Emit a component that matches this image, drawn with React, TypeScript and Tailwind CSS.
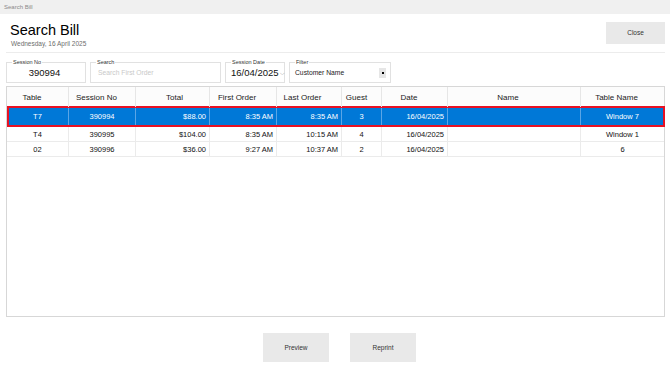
import { ReactNode } from "react";

type Col = {
  name: string;
  width: string;
  head: string;
  body: string;
};

const cols: Col[] = [
  { name: "Table", width: "w-[62px]", head: "pr-[11px]", body: "justify-center" },
  { name: "Session No", width: "w-[67px]", head: "pr-[11px]", body: "justify-center" },
  { name: "Total", width: "w-[74px]", head: "pl-[4px]", body: "justify-end pr-[3px]" },
  { name: "First Order", width: "w-[67px]", head: "pr-[12px]", body: "justify-end pr-[3px]" },
  { name: "Last Order", width: "w-[65px]", head: "pr-[13px]", body: "justify-end pr-[3px]" },
  { name: "Guest", width: "w-[40px]", head: "pr-[10px]", body: "justify-center" },
  { name: "Date", width: "w-[66px]", head: "pr-[11px]", body: "justify-end pr-[3px]" },
  { name: "Name", width: "w-[133px]", head: "pr-[12px]", body: "justify-center" },
  { name: "Table Name", width: "w-[83px]", head: "pr-[12px]", body: "justify-center" },
];

const rows = [
  ["T7", "390994", "$88.00", "8:35 AM", "8:35 AM", "3", "16/04/2025", "", "Window 7"],
  ["T4", "390995", "$104.00", "8:35 AM", "10:15 AM", "4", "16/04/2025", "", "Window 1"],
  ["02", "390996", "$36.00", "9:27 AM", "10:37 AM", "2", "16/04/2025", "", "6"],
];

// group box with the caption sitting on the top border
function Box({ label, width, children }: { label: string; width: string; children: ReactNode }) {
  return (
    <div className={`relative h-[21px] ${width} border border-[#e1e1e1] flex items-center`}>
      <span className="absolute left-[5px] top-[-4px] bg-white px-px text-[5.5px] leading-[6px] text-[#333]">
        {label}
      </span>
      {children}
    </div>
  );
}

function Row({ cells, selected }: { cells: string[]; selected?: boolean }) {
  return (
    <div className="flex h-full">
      {cols.map((c, i) => (
        <div
          key={c.name}
          className={`${c.width} flex items-center pt-px ${c.body} ${
            i < cols.length - 1 ? (selected ? "border-r border-[#5aa5e6]" : "border-r border-[#ebebeb]") : ""
          }`}
        >
          {cells[i]}
        </div>
      ))}
    </div>
  );
}

export default function App() {
  return (
    <div className="w-[670px] h-[376px] bg-white font-['Liberation_Sans',Arial,sans-serif] text-[#222] overflow-hidden">
      {/* window title */}
      <div className="h-[14px] bg-[#f0f0f0] pl-[4px] text-[6px] leading-[14px] text-[#8a8a8a]">Search Bill</div>

      {/* heading + close */}
      <div className="flex justify-between pl-[10px] pr-[5px] pt-[8px] h-[38px]">
        <div>
          <h1 className="text-[14.5px] leading-[17px] text-black">Search Bill</h1>
          <p className="mt-px pl-px text-[6.5px] leading-[8px] text-[#6d6d6d]">Wednesday, 16 April 2025</p>
        </div>
        <button className="w-[59px] h-[22px] bg-[#e9e9e9] text-[6.5px] text-[#333]">Close</button>
      </div>
      <div className="h-px ml-[6px] mr-[5px] bg-[#ececec]" />

      {/* filters */}
      <div className="flex gap-[4px] pl-[6px] mt-[9px]">
        <Box label="Session No" width="w-[80px]">
          <span className="w-full text-center text-[9.5px] leading-[10px] pt-[1px] pr-[3px] text-[#111]">390994</span>
        </Box>
        <Box label="Search" width="w-[131px]">
          <span className="pl-[7px] pt-[2px] text-[6.75px] text-[#c9c9c9]">Search First Order</span>
        </Box>
        <Box label="Session Date" width="w-[60px]">
          <span className="pl-[5px] pt-[1px] text-[9.5px] leading-[10px] text-[#111]">16/04/2025</span>
          <span className="ml-[1px] pt-[1px] text-[6px] text-[#888]">⌵</span>
        </Box>
        <Box label="Filter" width="w-[102px]">
          <span className="pl-[5px] pt-[1px] text-[6.75px] text-[#222]">Customer Name</span>
          <span className="ml-auto mr-[4px] w-[7px] h-[10px] bg-[#e6e6e6] flex items-center justify-center">
            <span className="w-[2px] h-[2px] bg-black" />
          </span>
        </Box>
      </div>

      {/* grid */}
      <div className="ml-[6px] mt-[3px] w-[659px] h-[231px] border border-[#d7d7d7] text-[7.5px]">
        <div className="flex h-[20px] bg-[#fcfcfc] text-[8px] text-[#222]">
          {cols.map((c, i) => (
            <div
              key={c.name}
              className={`${c.width} flex items-center justify-center pt-[2px] ${c.head} ${
                i < cols.length - 1 ? "border-r border-[#e6e6e6]" : ""
              }`}
            >
              {c.name}
            </div>
          ))}
        </div>
        <div className="h-[21px] -mt-px border-2 border-[#e81123] bg-[#0078d7] text-white -mr-px">
          <div className="-mx-[2px] h-full">
            <Row cells={rows[0]} selected />
          </div>
        </div>
        {rows.slice(1).map((r) => (
          <div key={r[1]} className="h-[15px] border-b border-[#ebebeb] text-[#111]">
            <Row cells={r} />
          </div>
        ))}
      </div>

      {/* actions */}
      <div className="flex justify-center gap-[21px] pl-[9px] mt-[16px]">
        <button className="w-[66px] h-[29px] bg-[#e9e9e9] text-[6.5px] text-[#333]">Preview</button>
        <button className="w-[66px] h-[29px] bg-[#e9e9e9] text-[6.5px] text-[#333]">Reprint</button>
      </div>
    </div>
  );
}
